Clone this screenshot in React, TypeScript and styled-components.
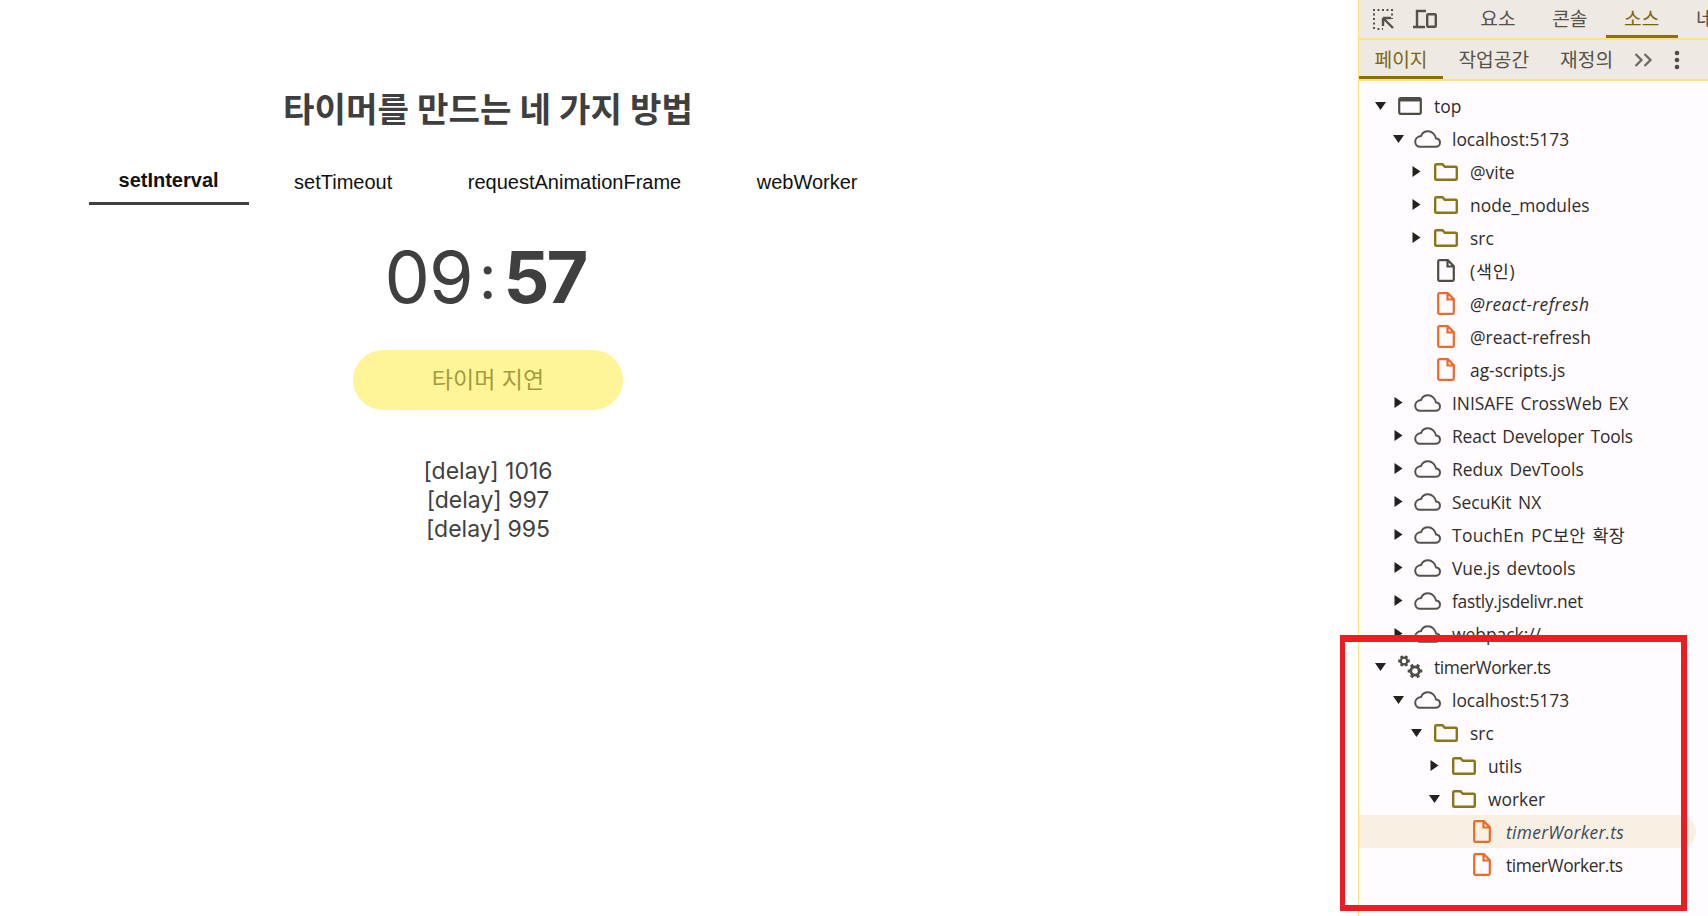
import React from "react";
import styled, { createGlobalStyle } from "styled-components";

const Global = createGlobalStyle`
  html, body { margin: 0; padding: 0; background: #fff; }
  #root { width: 1708px; height: 916px; overflow: hidden; }
`;

const Page = styled.div`
  position: relative;
  display: flex;
  width: 1708px;
  height: 916px;
  overflow: hidden;
  font-family: Inter, "Noto Sans CJK KR", sans-serif;
`;

const Main = styled.main`
  flex: 0 0 976px;
  display: flex;
  flex-direction: column;
  align-items: center;
  padding-top: 86px;
  color: #3f3f3f;
`;

const Title = styled.h1`
  margin: 0;
  font-size: 34.2px;
  line-height: 48px;
  font-weight: 700;
  color: #3f3f3f;
  font-family: Inter, "Noto Sans CJK KR", sans-serif;
`;

const TabRow = styled.nav`
  display: flex;
  gap: 15.5px;
  margin-top: 22px;
  height: 49px;
`;

const PageTab = styled.div<{ $active?: boolean }>`
  padding: ${(p) => (p.$active ? "2px" : "4px")} 30px 0;
  height: 49px;
  box-sizing: border-box;
  display: flex;
  align-items: center;
  font-family: "Liberation Sans", Arial, sans-serif;
  font-size: 20px;
  color: #111;
  font-weight: ${(p) => (p.$active ? 700 : 400)};
  border-bottom: ${(p) => (p.$active ? "3px solid #3f3f3f" : "0")};
`;

const Timer = styled.div`
  margin: 24px 6px 0 0;
  display: flex;
  align-items: center;
  font-size: 72px;
  line-height: 96px;
  letter-spacing: -1px;
  color: #3f3f3f;
`;

const Colon = styled.span`
  margin: 0 8px 0 6px;
  font-size: 62px;
`;

const Seconds = styled.span`
  font-weight: 700;
  letter-spacing: -3px;
`;

const DelayButton = styled.button`
  margin-top: 25px;
  width: 270px;
  height: 60px;
  border: 0;
  border-radius: 30px;
  background: #fff598;
  color: #a59a3c;
  font-family: Inter, "Noto Sans CJK KR", sans-serif;
  font-size: 23px;
  padding: 0 0 4px;
`;

const DelayList = styled.div`
  margin-top: 47px;
  font-size: 23px;
  line-height: 29px;
  text-align: center;
  color: #3f3f3f;
`;

const Panel = styled.aside`
  flex: 1;
  min-width: 0;
  margin-left: 382px;
  border-left: 1px solid #ffe27f;
  background: #fffbff;
  display: flex;
  flex-direction: column;
  font-family: "Open Sans", "Noto Sans CJK KR", sans-serif;
  overflow: hidden;
`;

const ToolbarTop = styled.div`
  flex: 0 0 38px;
  display: flex;
  align-items: stretch;
  background: #eee9e2;
  border-bottom: 2px solid #ffe27f;
  padding-left: 13px;
  white-space: nowrap;
`;

const ToolbarSub = styled.div`
  flex: 0 0 39px;
  display: flex;
  align-items: stretch;
  background: #eee9e2;
  border-bottom: 2px solid #ffe27f;
  white-space: nowrap;
`;

const ToolIcon = styled.span<{ $gap: number }>`
  display: flex;
  align-items: center;
  margin-right: ${(p) => p.$gap}px;
`;

const Divider = styled.span`
  align-self: flex-start;
  width: 2px;
  height: 24px;
  margin: 6px 10px 0 0;
  background: #ffe27f;
`;

const PanelTab = styled.div<{ $active?: boolean; $pad: number }>`
  position: relative;
  display: flex;
  align-items: center;
  padding: 0 ${(p) => p.$pad}px 2px;
  font-size: 19.2px;
  color: ${(p) => (p.$active ? "#7d6510" : "#55524c")};
  box-shadow: ${(p) => (p.$active ? "inset 0 -3px 0 #8b6f14" : "none")};
`;

const More = styled.span`
  display: flex;
  align-items: center;
  margin-left: 5px;
`;

const Kebab = styled.span`
  display: flex;
  align-items: center;
  margin-left: 21px;
`;

const Tree = styled.ul`
  list-style: none;
  margin: 0;
  padding: 8px 0 0;
`;

const Row = styled.li<{ $level: number; $selected?: boolean }>`
  display: flex;
  align-items: center;
  height: 33px;
  box-sizing: border-box;
  padding-left: ${(p) => 16 + p.$level * 18}px;
  margin-right: 12px;
  border-radius: 0 17px 17px 0;
  background: ${(p) => (p.$selected ? "#f7f0e3" : "transparent")};
  font-size: 17.4px;
  word-spacing: 2px;
  color: #2f2d29;
  white-space: nowrap;
`;

const ArrowBox = styled.span`
  flex: 0 0 11px;
  margin-right: 10px;
  display: flex;
  justify-content: center;
`;

const IconBox = styled.span`
  flex: 0 0 27px;
  margin-right: 11px;
  display: flex;
  justify-content: center;
  align-items: center;
`;

const Label = styled.span<{ $italic?: boolean; $blue?: boolean; $track?: number }>`
  font-style: ${(p) => (p.$italic ? "italic" : "normal")};
  color: ${(p) => (p.$blue ? "#3c4a5e" : "inherit")};
  letter-spacing: ${(p) => p.$track ?? 0}px;
`;

const RedBox = styled.div`
  position: absolute;
  left: 1340px;
  top: 635px;
  width: 347px;
  height: 276px;
  box-sizing: border-box;
  border: 6px solid #ec1c24;
  border-width: 7px 6px 6px 5px;
  pointer-events: none;
`;

const Inspect = () => (
  <svg width="23" height="23" viewBox="0 0 23 23" fill="none">
    <path d="M1 2h2M5.500 2h2M10 2h2M14.500 2h2M19 2h2M2 1v2M2 5.500v2M2 10v2M2 14.500v2M2 19v2M5.500 21h2M10 21h1M20 5.500v2M20 10v1" stroke="#55524c" strokeWidth="2" />
    <path d="M11 10h8v0M11 10v8M11.500 10.500 21 20" stroke="#55524c" strokeWidth="2.400" />
  </svg>
);

const Device = () => (
  <svg width="25" height="20" viewBox="0 0 25 20" fill="none">
    <path d="M5 17V2h9M1 18h12" stroke="#55524c" strokeWidth="2.400" />
    <rect x="15.200" y="5.200" width="8.600" height="12.600" rx="1" stroke="#55524c" strokeWidth="2.400" />
  </svg>
);

const Chevrons = () => (
  <svg width="19" height="16" viewBox="0 0 19 16" fill="none">
    <path d="M1.500 2 7.500 8l-6 6M10.500 2l6 6-6 6" stroke="#6b675f" strokeWidth="2.200" />
  </svg>
);

const Dots = () => (
  <svg width="6" height="20" viewBox="0 0 6 20" fill="#4f4c46">
    <circle cx="3" cy="3" r="2.300" />
    <circle cx="3" cy="10" r="2.300" />
    <circle cx="3" cy="17" r="2.300" />
  </svg>
);

const Arrow = ({ open }: { open: boolean }) =>
  open ? (
    <svg width="11" height="8" viewBox="0 0 11 8">
      <path d="M0 0h11L5.500 8z" fill="#24221e" />
    </svg>
  ) : (
    <svg width="9" height="11" viewBox="0 0 9 11">
      <path d="M0.500 0 8.500 5.500 0.500 11z" fill="#24221e" />
    </svg>
  );

const Cloud = () => (
  <svg width="27" height="18" viewBox="0 0 27 18" fill="none">
    <path
      d="M6 16.800h15.500c2.700 0 4.500-1.900 4.500-4.200 0-2.300-1.800-4-4-4.200C21.200 4.500 18 1.300 14 1.300c-3.200 0-5.800 1.900-7 4.800C3.600 6.500 1.200 8.900 1.200 11.600c0 2.900 2 5.200 4.800 5.200z"
      stroke="#55524c"
      strokeWidth="2"
    />
  </svg>
);

const Folder = () => (
  <svg width="24" height="18" viewBox="0 0 24 18" fill="none">
    <path
      d="M1.200 2.500c0-.8.500-1.300 1.300-1.300h6l2.300 2.600h10.700c.8 0 1.300.5 1.300 1.300v10.400c0 .8-.5 1.300-1.300 1.300H2.500c-.8 0-1.300-.5-1.300-1.300z"
      stroke="#8c7518"
      strokeWidth="2.400"
    />
  </svg>
);

const FileIcon = ({ color }: { color: string }) => (
  <svg width="18" height="23" viewBox="0 0 18 23" fill="none">
    <path
      d="M2.500 1.200h8.300l6 6v13.300c0 .8-.5 1.300-1.300 1.300h-13c-.8 0-1.300-.5-1.300-1.300V2.500c0-.8.500-1.300 1.300-1.300zM10.500 1.500V7.500h6"
      stroke={color}
      strokeWidth="2.200"
    />
  </svg>
);

const WindowIcon = () => (
  <svg width="24" height="18" viewBox="0 0 24 18" fill="none">
    <rect x="1.200" y="1.200" width="21.600" height="15.600" rx="1.500" stroke="#4f4c46" strokeWidth="2.200" />
    <path d="M1 3h22" stroke="#4f4c46" strokeWidth="3" />
  </svg>
);

const gearPath = (cx: number, cy: number, r: number) => {
  const teeth = Array.from({ length: 6 }, (_, i) => {
    const a = (i * Math.PI) / 3;
    const x = cx + Math.cos(a) * r * 1.05;
    const y = cy + Math.sin(a) * r * 1.05;
    return `M${cx} ${cy}L${x.toFixed(2)} ${y.toFixed(2)}`;
  });
  return teeth.join("");
};

const Gears = () => (
  <svg width="26" height="24" viewBox="0 0 26 24" fill="none">
    <path d={gearPath(7, 6, 5.500)} stroke="#4f4c46" strokeWidth="2.800" />
    <circle cx="7" cy="6" r="3.300" fill="#fffbff" stroke="#4f4c46" strokeWidth="2.200" />
    <path d={gearPath(18, 16, 7)} stroke="#4f4c46" strokeWidth="3.200" />
    <circle cx="18" cy="16" r="4.200" fill="#fffbff" stroke="#4f4c46" strokeWidth="2.800" />
  </svg>
);

type Kind = "window" | "cloud" | "folder" | "file" | "orange" | "gears";
type Item = {
  level: number;
  kind: Kind;
  label: string;
  open?: boolean;
  leaf?: boolean;
  italic?: boolean;
  selected?: boolean;
  blue?: boolean;
  track?: number;
};

const items: Item[] = [
  { level: 0, kind: "window", label: "top", open: true },
  { level: 1, kind: "cloud", label: "localhost:5173", open: true },
  { level: 2, kind: "folder", label: "@vite" },
  { level: 2, kind: "folder", label: "node_modules" },
  { level: 2, kind: "folder", label: "src" },
  { level: 2, kind: "file", label: "(색인)", leaf: true, track: 0.8 },
  { level: 2, kind: "orange", label: "@react-refresh", leaf: true, italic: true, track: 0.45 },
  { level: 2, kind: "orange", label: "@react-refresh", leaf: true },
  { level: 2, kind: "orange", label: "ag-scripts.js", leaf: true },
  { level: 1, kind: "cloud", label: "INISAFE CrossWeb EX" },
  { level: 1, kind: "cloud", label: "React Developer Tools", track: -0.15 },
  { level: 1, kind: "cloud", label: "Redux DevTools" },
  { level: 1, kind: "cloud", label: "SecuKit NX" },
  { level: 1, kind: "cloud", label: "TouchEn PC보안 확장", track: 0.3 },
  { level: 1, kind: "cloud", label: "Vue.js devtools" },
  { level: 1, kind: "cloud", label: "fastly.jsdelivr.net", track: -0.3 },
  { level: 1, kind: "cloud", label: "webpack://" },
  { level: 0, kind: "gears", label: "timerWorker.ts", open: true, track: -0.4 },
  { level: 1, kind: "cloud", label: "localhost:5173", open: true },
  { level: 2, kind: "folder", label: "src", open: true },
  { level: 3, kind: "folder", label: "utils" },
  { level: 3, kind: "folder", label: "worker", open: true },
  { level: 4, kind: "orange", label: "timerWorker.ts", leaf: true, italic: true, selected: true, blue: true, track: 0.3 },
  { level: 4, kind: "orange", label: "timerWorker.ts", leaf: true, track: -0.4 },
];

const renderIcon = (k: Kind) => {
  switch (k) {
    case "window":
      return <WindowIcon />;
    case "cloud":
      return <Cloud />;
    case "folder":
      return <Folder />;
    case "file":
      return <FileIcon color="#4f4c46" />;
    case "orange":
      return <FileIcon color="#ea6a2a" />;
    case "gears":
      return <Gears />;
  }
};

export default function App() {
  return (
    <>
      <Global />
      <Page>
        <Main>
          <Title>타이머를 만드는 네 가지 방법</Title>
          <TabRow>
            <PageTab $active>setInterval</PageTab>
            <PageTab>setTimeout</PageTab>
            <PageTab>requestAnimationFrame</PageTab>
            <PageTab>webWorker</PageTab>
          </TabRow>
          <Timer>
            09<Colon>:</Colon>
            <Seconds>57</Seconds>
          </Timer>
          <DelayButton>타이머 지연</DelayButton>
          <DelayList>
            <div>[delay] 1016</div>
            <div>[delay] 997</div>
            <div>[delay] 995</div>
          </DelayList>
        </Main>
        <Panel>
          <ToolbarTop>
            <ToolIcon $gap={17}>
              <Inspect />
            </ToolIcon>
            <ToolIcon $gap={15}>
              <Device />
            </ToolIcon>
            <Divider />
            <PanelTab $pad={18.3}>요소</PanelTab>
            <PanelTab $pad={18.3}>콘솔</PanelTab>
            <PanelTab $pad={18.3} $active>
              소스
            </PanelTab>
            <PanelTab $pad={18.3}>네트워크</PanelTab>
          </ToolbarTop>
          <ToolbarSub>
            <PanelTab $pad={15.5} $active>
              페이지
            </PanelTab>
            <PanelTab $pad={15.5}>작업공간</PanelTab>
            <PanelTab $pad={15.5}>재정의</PanelTab>
            <More>
              <Chevrons />
            </More>
            <Kebab>
              <Dots />
            </Kebab>
          </ToolbarSub>
          <Tree>
            {items.map((it, i) => (
              <Row key={i} $level={it.level} $selected={it.selected}>
                <ArrowBox>{!it.leaf && <Arrow open={!!it.open} />}</ArrowBox>
                <IconBox>{renderIcon(it.kind)}</IconBox>
                <Label $italic={it.italic} $blue={it.blue} $track={it.track}>
                  {it.label}
                </Label>
              </Row>
            ))}
          </Tree>
        </Panel>
        <RedBox />
      </Page>
    </>
  );
}
